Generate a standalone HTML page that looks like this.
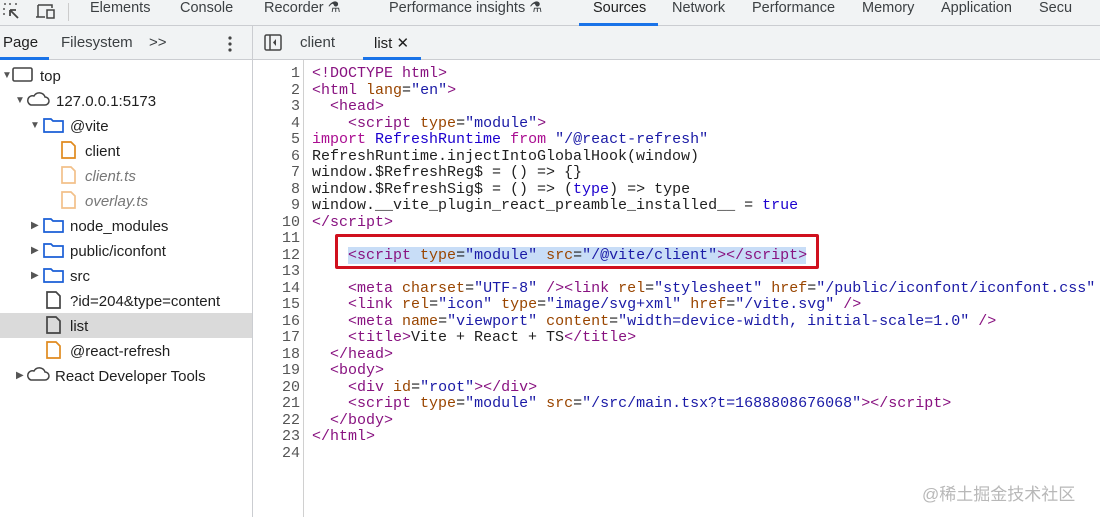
<!DOCTYPE html>
<html><head><style>
*{margin:0;padding:0;box-sizing:border-box}
body{width:1100px;height:517px;overflow:hidden;background:#fff;font-family:"Liberation Sans",sans-serif;position:relative;color:#1f1f1f}
.bar1{position:absolute;left:0;top:0;width:1100px;height:26px;background:#f1f3f4;border-bottom:1px solid #cbcdd1}
.bar1 span{position:absolute;top:0;font-size:14.5px;color:#3c4043}
.bar2{position:absolute;left:0;top:26px;width:1100px;height:34px;background:#f1f3f4;border-bottom:1px solid #cbcdd1}
.bar2 span{position:absolute;top:8px;font-size:15px;color:#3c4043}
.vl{position:absolute;left:252px;top:26px;width:1px;height:491px;background:#cbcdd1}
.tree div{position:absolute;font-size:15px;height:25px;line-height:25px;white-space:nowrap}
.code{position:absolute;left:0;top:66px;font-family:"Liberation Mono",monospace;font-size:15px;line-height:16.5px;white-space:pre}
.ln{position:absolute;left:262px;width:38px;text-align:right;color:#555}
.gut{position:absolute;left:303px;top:60px;width:1px;height:457px;background:#d0d0d0}
.t{color:#881280}.a{color:#994500}.v{color:#1a1aa6}.k{color:#aa0d91}.b{color:#1c00cf}
.ico{position:absolute}
</style></head><body>
<div class="bar1">
<svg class="ico" style="left:2px;top:2px" width="20" height="20"><path d="M2 2h2M7 2h2M2 6v2M2 11v2M13 2h2" stroke="#555" stroke-width="1.5"/><path d="M8 8l8 8M8 8v6M8 8h6" stroke="#444" stroke-width="1.8" fill="none"/></svg>
<svg class="ico" style="left:35px;top:2px" width="22" height="20"><path d="M3 3h14v3M3 3v12M1 15h9" stroke="#444" stroke-width="1.5" fill="none"/><rect x="12" y="8" width="7" height="8" stroke="#444" stroke-width="1.5" fill="none"/></svg>
<div style="position:absolute;left:68px;top:3px;width:1px;height:18px;background:#ccc"></div>
<span style="left:90px">Elements</span><span style="left:180px">Console</span><span style="left:264px">Recorder ⚗</span><span style="left:389px">Performance insights ⚗</span>
<span style="left:593px;color:#1f1f1f">Sources</span><div style="position:absolute;left:579px;top:23px;width:79px;height:3px;background:#1a73e8"></div>
<span style="left:672px">Network</span><span style="left:752px">Performance</span><span style="left:862px">Memory</span><span style="left:941px">Application</span><span style="left:1039px">Secu</span>
</div>
<div class="bar2">
<span style="left:3px;color:#1f1f1f">Page</span><div style="position:absolute;left:0;top:31px;width:49px;height:3px;background:#1a73e8"></div>
<span style="left:61px">Filesystem</span><span style="left:149px">&gt;&gt;</span>
<svg class="ico" style="left:226px;top:9px" width="8" height="18"><circle cx="4" cy="3" r="1.6" fill="#444"/><circle cx="4" cy="9" r="1.6" fill="#444"/><circle cx="4" cy="15" r="1.6" fill="#444"/></svg>
<svg class="ico" style="left:264px;top:8px" width="20" height="18"><rect x="1" y="1" width="16" height="15" rx="1.5" stroke="#444" stroke-width="1.5" fill="none"/><path d="M6 1v15" stroke="#444" stroke-width="1.5"/><path d="M12 5l-3 3.5 3 3.5z" fill="#444"/></svg>
<span style="left:300px">client</span><span style="left:374px;color:#1f1f1f">list ✕</span><div style="position:absolute;left:363px;top:31px;width:58px;height:3px;background:#1a73e8"></div>
</div>
<div class="vl"></div>
<div style="position:absolute;left:0;top:313px;width:252px;height:25px;background:#dadada"></div>
<div class="tree">
<div style="left:2px;top:63px;font-size:10px;color:#555">▼</div>
<svg class="ico" style="left:12px;top:66px" width="22" height="18"><rect x="1" y="2" width="19" height="13" rx="1.5" stroke="#444" stroke-width="1.6" fill="none"/></svg>
<div style="left:40px;top:64px">top</div>
<div style="left:15px;top:88px;font-size:10px;color:#555">▼</div>
<svg class="ico" style="left:26px;top:91px" width="24" height="16"><path d="M5 14h14a4 4 0 0 0 0-8 6 6 0 0 0-11-1 4.5 4.5 0 0 0-3 9z" stroke="#444" stroke-width="1.5" fill="none"/></svg>
<div style="left:56px;top:89px">127.0.0.1:5173</div>
<div style="left:30px;top:113px;font-size:10px;color:#555">▼</div>
<div style="left:70px;top:114px">@vite</div>
<div style="left:85px;top:139px">client</div>
<div style="left:85px;top:164px;color:#777;font-style:italic">client.ts</div>
<div style="left:85px;top:189px;color:#777;font-style:italic">overlay.ts</div>
<div style="left:31px;top:213px;font-size:10px;color:#555">▶</div><div style="left:70px;top:214px">node_modules</div>
<div style="left:31px;top:238px;font-size:10px;color:#555">▶</div><div style="left:70px;top:239px">public/iconfont</div>
<div style="left:31px;top:263px;font-size:10px;color:#555">▶</div><div style="left:70px;top:264px">src</div>
<div style="left:70px;top:289px">?id=204&amp;type=content</div>
<div style="left:70px;top:314px">list</div>
<div style="left:70px;top:339px">@react-refresh</div>
<div style="left:16px;top:363px;font-size:10px;color:#555">▶</div>
<svg class="ico" style="left:26px;top:366px" width="24" height="16"><path d="M5 14h14a4 4 0 0 0 0-8 6 6 0 0 0-11-1 4.5 4.5 0 0 0-3 9z" stroke="#444" stroke-width="1.5" fill="none"/></svg>
<div style="left:55px;top:364px">React Developer Tools</div>
</div>
<svg class="ico" style="left:0;top:0" width="252" height="517">
<g fill="none" stroke-width="1.7">
<path d="M44 119h7l2 2h10v11H44z" stroke="#1a5fd6"/>
<path d="M44 244h7l2 2h10v11H44z" stroke="#1a5fd6"/>
<path d="M44 269h7l2 2h10v11H44z" stroke="#1a5fd6"/>
<path d="M44 219h7l2 2h10v11H44z" stroke="#1a5fd6"/>
<path d="M62 142h9l4 4v12H62z" stroke="#e08a1e"/>
<path d="M62 167h9l4 4v12H62z" stroke="#f2c08a"/>
<path d="M62 192h9l4 4v12H62z" stroke="#f2c08a"/>
<path d="M47 292h9l4 4v12H47z" stroke="#444"/>
<path d="M47 317h9l4 4v12H47z" stroke="#444"/>
<path d="M47 342h9l4 4v12H47z" stroke="#e08a1e"/>
</g></svg>
<div class="gut"></div>
<div style="position:absolute;left:348px;top:247px;width:458px;height:16.5px;background:#c8ddf7"></div>
<div style="position:absolute;left:335px;top:234px;width:484px;height:35px;border:3px solid #d0101e;border-radius:2px"></div>
<div class="code ln">1
2
3
4
5
6
7
8
9
10
11
12
13
14
15
16
17
18
19
20
21
22
23
24</div>
<div class="code" style="left:312px"><span class="t">&lt;!DOCTYPE html&gt;</span>
<span class="t">&lt;html</span> <span class="a">lang</span>=<span class="v">"en"</span><span class="t">&gt;</span>
  <span class="t">&lt;head&gt;</span>
    <span class="t">&lt;script</span> <span class="a">type</span>=<span class="v">"module"</span><span class="t">&gt;</span>
<span class="k">import</span> <span class="b">RefreshRuntime</span> <span class="k">from</span> <span class="v">"/@react-refresh"</span>
RefreshRuntime.injectIntoGlobalHook(window)
window.$RefreshReg$ = () =&gt; {}
window.$RefreshSig$ = () =&gt; (<span class="b">type</span>) =&gt; type
window.__vite_plugin_react_preamble_installed__ = <span class="b">true</span>
<span class="t">&lt;/script&gt;</span>

    <span class="t">&lt;script</span> <span class="a">type</span>=<span class="v">"module"</span> <span class="a">src</span>=<span class="v">"/@vite/client"</span><span class="t">&gt;&lt;/script&gt;</span>

    <span class="t">&lt;meta</span> <span class="a">charset</span>=<span class="v">"UTF-8"</span> <span class="t">/&gt;&lt;link</span> <span class="a">rel</span>=<span class="v">"stylesheet"</span> <span class="a">href</span>=<span class="v">"/public/iconfont/iconfont.css"</span>
    <span class="t">&lt;link</span> <span class="a">rel</span>=<span class="v">"icon"</span> <span class="a">type</span>=<span class="v">"image/svg+xml"</span> <span class="a">href</span>=<span class="v">"/vite.svg"</span> <span class="t">/&gt;</span>
    <span class="t">&lt;meta</span> <span class="a">name</span>=<span class="v">"viewport"</span> <span class="a">content</span>=<span class="v">"width=device-width, initial-scale=1.0"</span> <span class="t">/&gt;</span>
    <span class="t">&lt;title&gt;</span>Vite + React + TS<span class="t">&lt;/title&gt;</span>
  <span class="t">&lt;/head&gt;</span>
  <span class="t">&lt;body&gt;</span>
    <span class="t">&lt;div</span> <span class="a">id</span>=<span class="v">"root"</span><span class="t">&gt;&lt;/div&gt;</span>
    <span class="t">&lt;script</span> <span class="a">type</span>=<span class="v">"module"</span> <span class="a">src</span>=<span class="v">"/src/main.tsx?t=1688808676068"</span><span class="t">&gt;&lt;/script&gt;</span>
  <span class="t">&lt;/body&gt;</span>
<span class="t">&lt;/html&gt;</span>
</div>
<div style="position:absolute;left:922px;top:480px;font-size:17px;color:#b8b8b8;font-family:'Liberation Sans','Noto Sans CJK SC',sans-serif">@稀土掘金技术社区</div>
</body></html>
